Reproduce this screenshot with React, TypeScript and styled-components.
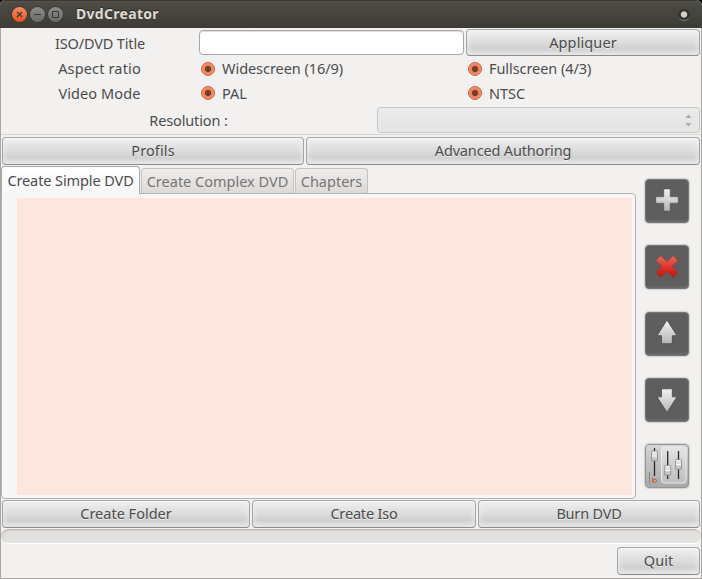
import React from "react";
import styled, { createGlobalStyle, css } from "styled-components";

const GlobalStyle = createGlobalStyle`
  * { box-sizing: border-box; }
  body { margin: 0; overflow: hidden; background: #000; }
  button { margin: 0; padding: 0; font: inherit; color: inherit; }
`;

const Window = styled.div`
  width: 702px;
  height: 579px;
  display: flex;
  flex-direction: column;
  font: 14.5px/20px "Noto Sans", sans-serif;
  color: #4c4c4c;
  background: #f2f1f0;
  border-radius: 5px 6px 0 0;
  overflow: hidden;
`;

const TitleBar = styled.header`
  height: 28px;
  flex: none;
  display: flex;
  align-items: center;
  padding: 0 10px 0 12px;
  gap: 3px;
  background: linear-gradient(#55534b, #4b4a43 3px, #3c3b37);
  border-top: 1px solid #393834;
`;

const WindowButton = styled.button<{ $close?: boolean }>`
  width: 15px;
  height: 15px;
  flex: none;
  display: grid;
  place-items: center;
  border: 0;
  border-radius: 50%;
  color: #393834;
  background: ${(p) => (p.$close ? "linear-gradient(#f98d64, #e9501e)" : "linear-gradient(#8d8c86, #6b6a65)")};
  box-shadow: 0 0 0 1px #3b3a36;
`;

const Text = styled.span<{ $spacing?: number }>`
  white-space: pre;
  letter-spacing: ${(p) => p.$spacing ?? 0}px;
`;

const WindowTitle = styled.h1`
  margin: 0 auto 0 10px;
  padding-bottom: 1px;
  font: bold 14px/20px "Noto Sans", sans-serif;
  color: #dfdbd2;
  text-shadow: 0 -1px #282824;
`;

const StatusDot = styled.span`
  width: 12px;
  height: 12px;
  border-radius: 50%;
  background: radial-gradient(circle, #d3cfc7 0 2.7px, #30302c 3.7px 6px);
  border-bottom: 1px solid #777670;
  margin-right: 2px;
`;

const Body = styled.main`
  flex: 1;
  border: solid #aaa6a1;
  border-width: 0 1px 1px;
  display: flex;
  flex-direction: column;
`;

const Settings = styled.section`
  height: 107px;
  flex: none;
  border-bottom: 1px solid #d8d6d4;
`;

const FieldRow = styled.div<{ $height: number; $lift?: number }>`
  display: grid;
  grid-template-columns: 198px 265px 1fr;
  column-gap: 2px;
  height: ${(p) => p.$height}px;
  align-items: center;
  padding-right: 1px;
  ${Text} {
    padding-bottom: ${(p) => p.$lift ?? 0}px;
  }
`;

const TitleRow = styled.div`
  display: grid;
  grid-template-columns: 198px 265px 1fr;
  column-gap: 2px;
  height: 28px;
  align-items: start;
  padding: 1px 1px 0 0;
`;

const FieldLabel = styled.label<{ $shift?: number }>`
  display: flex;
  justify-content: center;
  padding-right: ${(p) => p.$shift ?? 2}px;
`;

const TitleLabel = styled(FieldLabel)`
  padding-top: 4px;
`;

const Entry = styled.input`
  height: 25px;
  width: 265px;
  margin: 1px 0 0 -2px;
  border: 1px solid #aaa7a4;
  border-radius: 4px;
  background: #fff;
  box-shadow: inset 0 1px 1px #ddd;
  outline: 0;
`;

const RadioOption = styled.label`
  display: flex;
  align-items: center;
  gap: 7px;
`;

const RadioMark = styled.span`
  width: 14px;
  height: 14px;
  flex: none;
  border-radius: 50%;
  border: 1px solid #c75e3c;
  background: radial-gradient(circle, #713e2c 0 2.7px, #f18159 3.5px 4.5px, #f79b77 6px);
  box-shadow: 0 1px #fff;
`;

const ResolutionRow = styled.div`
  display: grid;
  grid-template-columns: 375px 1fr;
  height: 26px;
  margin-top: 3px;
  padding-right: 1px;
  align-items: center;
  ${Text} {
    padding-bottom: 1px;
  }
`;

const Combo = styled.div`
  height: 26px;
  border: 1px solid #c8c6c4;
  border-radius: 4px;
  margin-left: 1px;
  background: linear-gradient(#ebebeb, #e3e3e3);
  box-shadow: inset 0 0 5px #eeeeed;
  display: flex;
  justify-content: flex-end;
  align-items: center;
  padding: 1px 7px 0 0;
`;

const raised = css`
  border: 1px solid #a7a6a5;
  border-bottom-color: #8c8b8a;
  border-radius: 4px;
  background: linear-gradient(#efefef, #dedede 45%, #d0d0d0 75%, #dfdfdf);
  box-shadow: inset 0 1px #f8f8f8, inset 0 0 6px 1px rgba(245, 245, 245, 0.65);
`;

const PushButton = styled.button<{ $height?: number }>`
  ${raised}
  height: ${(p) => p.$height ?? 28}px;
  min-width: 0;
  text-shadow: 0 1px #eee;
  padding-bottom: 2px;
`;

const ApplyButton = styled(PushButton)`
  margin-left: -2px;
`;

const ActionRow = styled.div<{ $columns: string }>`
  display: grid;
  grid-template-columns: ${(p) => p.$columns};
  gap: 2px;
  height: 28px;
  padding: 0 1px;
  flex: none;
`;

const TopActions = styled.div`
  padding-top: 2px;
`;

const Workspace = styled.section`
  display: grid;
  grid-template-columns: 635px 1fr;
  height: 333px;
  margin: 1px 0;
  flex: none;
`;

const Notebook = styled.div`
  display: grid;
  grid-template-rows: 27px 1fr;
`;

const Tabs = styled.div`
  display: flex;
  align-items: flex-end;
  gap: 1px;
`;

const Tab = styled.button<{ $width: number; $active?: boolean }>`
  width: ${(p) => p.$width}px;
  height: ${(p) => (p.$active ? 28 : 25)}px;
  border: 1px solid ${(p) => (p.$active ? "#aaa7a4" : "#c5c2bf")};
  border-bottom: 0;
  border-radius: 4px 4px 0 0;
  background: ${(p) => (p.$active ? "linear-gradient(#fff, #f7f7f7)" : "linear-gradient(#efeeed, #ddd9d7)")};
  color: ${(p) => (p.$active ? "#4c4c4c" : "#777573")};
  align-self: ${(p) => (p.$active ? "flex-start" : "flex-end")};
  z-index: ${(p) => (p.$active ? 1 : 0)};
  padding-bottom: ${(p) => (p.$active ? 2 : 0)}px;
`;

const TabPanel = styled.div`
  border: 1px solid #b5b2af;
  border-radius: 0 4px 4px 4px;
  background: #f7f7f7;
  padding: 4px 3px 3px 15px;
  display: flex;
`;

const FileList = styled.div`
  flex: 1;
  background: #fde6de;
`;

const SideTools = styled.aside`
  display: flex;
  flex-direction: column;
  gap: 22.3px;
  padding: 13.2px 0 0 9px;
`;

const ToolButton = styled.button<{ $light?: boolean }>`
  width: 44px;
  height: 44px;
  flex: none;
  display: block;
  border: 1px solid ${(p) => (p.$light ? "#959595" : "#777")};
  border-radius: 4px;
  background: ${(p) => (p.$light ? "linear-gradient(#d6d6d6, #a9a9a9)" : "#5e5e5e")};
  box-shadow: 0 0 1px 1px #d1d0cf${(p) => (p.$light ? "" : ", inset 0 -2px #686868")};
  svg { display: block; }
`;

const Progress = styled.div`
  height: 15px;
  flex: none;
  margin-top: 1px;
  border-radius: 8px;
  border-top: 1px solid #bab8b6;
  border-bottom: 1px solid #fff;
  background: #e2e1e0;
  box-shadow: inset 2px 1px 2px #d5d3d1;
`;

const Footer = styled.footer`
  display: grid;
  grid-template-columns: 83px;
  justify-content: end;
  padding: 3px 1px 0 0;
`;

function Radio({ text, spacing }: { text: string; spacing?: number }) {
  return (
    <RadioOption>
      <RadioMark />
      <Text $spacing={spacing}>{text}</Text>
    </RadioOption>
  );
}

function Slider({ x, top, bottom, knob }: { x: number; top: number; bottom: number; knob: number }) {
  return (
    <g>
      <path d={`M${x} ${top}V${bottom}`} stroke="#292929" strokeWidth="1.3" />
      <rect x={x - 3} y={knob} width="6" height="10" rx="1" fill={`url(#knob)`} stroke="#858585" strokeWidth=".8" />
      <path d={`M${x - 2.5} ${knob + 5}h5`} stroke="#fff" />
    </g>
  );
}

function ToolIcon({ kind }: { kind: "add" | "remove" | "up" | "down" | "mixer" }) {
  return (
    <svg width="42" height="42" viewBox="0 0 42 42" fill="none">
      <defs>
        <linearGradient id={`fill-${kind}`} x1="0" y1="0" x2="0" y2="1">
          <stop stopColor={kind === "remove" ? "#f36557" : "#f3f3f3"} />
          <stop offset="1" stopColor={kind === "remove" ? "#c90d08" : "#b4b4b4"} />
        </linearGradient>
      </defs>
      {kind === "add" && (
        <path d="M17.8 9h6.4v7.8h8v6.4h-8V31h-6.4v-7.8h-8v-6.4h8z" fill="url(#fill-add)" stroke="#484848" strokeWidth=".5" />
      )}
      {kind === "remove" && (
        <path
          d="M14.8 9.7 21 15.7l6.2-6L32 14.5l-6.1 6 6.1 6-4.8 4.8-6.2-6-6.2 6-4.8-4.8 6.1-6-6.1-6z"
          fill="url(#fill-remove)"
          stroke="#a52a24"
          strokeWidth=".5"
        />
      )}
      {kind === "up" && (
        <path d="m21 7 10 15.7h-4.7v8H15.5v-8H11z" fill="url(#fill-up)" stroke="#484848" strokeWidth=".8" />
      )}
      {kind === "down" && (
        <path d="M15.5 9.8h10.8v8H31L21 33.5l-10-15.7h4.5z" fill="url(#fill-down)" stroke="#484848" strokeWidth=".8" />
      )}
      {kind === "mixer" && (
        <>
          <defs>
            <linearGradient id="panel" x1="0" y1="0" x2="0" y2="1">
              <stop stopColor="#e4e4e4" />
              <stop offset="1" stopColor="#bebebe" />
            </linearGradient>
            <linearGradient id="knob" x1="0" y1="0" x2="0" y2="1">
              <stop stopColor="#f1f1f1" />
              <stop offset="1" stopColor="#bdbdbd" />
            </linearGradient>
          </defs>
          <path d="M1 5h14M1 9h14M1 14h14M1 20h14M1 25h14M1 31h14" stroke="#c5c5c5" strokeWidth=".5" />
          <rect x="15.5" y="2" width="24.5" height="36" rx="3" fill="url(#panel)" stroke="#ededed" />
          <Slider x={8.5} top={3} bottom={31} knob={6} />
          <Slider x={21.7} top={6} bottom={34} knob={20.3} />
          <Slider x={32.5} top={6} bottom={34} knob={14.5} />
          <path d="M3.5 27v12M6.5 32v6" stroke="#858585" strokeWidth=".9" />
          <rect x="7.3" y="34.3" width="3" height="3" rx="1" fill="#f4b06f" stroke="#b7442b" strokeWidth=".9" />
        </>
      )}
    </svg>
  );
}

function SettingsPanel() {
  return (
    <Settings>
      <TitleRow>
        <TitleLabel $shift={0}><Text $spacing={-0.14}>ISO/DVD Title</Text></TitleLabel>
        <Entry aria-label="ISO/DVD Title" />
        <ApplyButton $height={27}><Text $spacing={0.1}>Appliquer</Text></ApplyButton>
      </TitleRow>
      <FieldRow $height={26} $lift={2}>
        <FieldLabel $shift={1}><Text $spacing={0.15}>Aspect ratio</Text></FieldLabel>
        <Radio text="Widescreen (16/9)" spacing={-0.05} />
        <Radio text="Fullscreen (4/3)" spacing={-0.07} />
      </FieldRow>
      <FieldRow $height={22}>
        <FieldLabel $shift={1}><Text $spacing={0.1}>Video Mode</Text></FieldLabel>
        <Radio text="PAL" />
        <Radio text="NTSC" />
      </FieldRow>
      <ResolutionRow>
        <FieldLabel $shift={0}><Text $spacing={-0.14}>Resolution :</Text></FieldLabel>
        <Combo>
          <svg width="7" height="13" fill="#aaa"><path d="M.5 4h6l-3-3.5zM.5 9h6l-3 3.5z" /></svg>
        </Combo>
      </ResolutionRow>
    </Settings>
  );
}

export default function App() {
  return (
    <>
      <GlobalStyle />
      <Window>
        <TitleBar>
          <WindowButton $close aria-label="Close">
            <svg width="9" height="9" stroke="currentColor" strokeWidth="1.2"><path d="m2 2 5 5M7 2 2 7" /></svg>
          </WindowButton>
          <WindowButton aria-label="Minimize">
            <svg width="9" height="9" stroke="currentColor"><path d="M1 4.5h7" /></svg>
          </WindowButton>
          <WindowButton aria-label="Maximize">
            <svg width="9" height="9" stroke="currentColor" fill="none"><path d="M1.5 1.5h6v6h-6z" /></svg>
          </WindowButton>
          <WindowTitle><Text $spacing={0.3}>DvdCreator</Text></WindowTitle>
          <StatusDot />
        </TitleBar>
        <Body>
          <SettingsPanel />
          <TopActions>
            <ActionRow $columns="302px 1fr">
              <PushButton><Text $spacing={0.1}>Profils</Text></PushButton>
              <PushButton><Text $spacing={-0.16}>Advanced Authoring</Text></PushButton>
            </ActionRow>
          </TopActions>
          <Workspace>
            <Notebook>
              <Tabs>
                <Tab $active $width={139}><Text $spacing={-0.1}>Create Simple DVD</Text></Tab>
                <Tab $width={153}><Text>Create Complex DVD</Text></Tab>
                <Tab $width={73}><Text>Chapters</Text></Tab>
              </Tabs>
              <TabPanel><FileList /></TabPanel>
            </Notebook>
            <SideTools>
              <ToolButton aria-label="Add"><ToolIcon kind="add" /></ToolButton>
              <ToolButton aria-label="Remove"><ToolIcon kind="remove" /></ToolButton>
              <ToolButton aria-label="Move up"><ToolIcon kind="up" /></ToolButton>
              <ToolButton aria-label="Move down"><ToolIcon kind="down" /></ToolButton>
              <ToolButton $light aria-label="Levels"><ToolIcon kind="mixer" /></ToolButton>
            </SideTools>
          </Workspace>
          <ActionRow $columns="248px 224px 1fr">
            <PushButton><Text>Create Folder</Text></PushButton>
            <PushButton><Text $spacing={-0.18}>Create Iso</Text></PushButton>
            <PushButton><Text $spacing={-0.2}>Burn DVD</Text></PushButton>
          </ActionRow>
          <Progress />
          <Footer><PushButton><Text>Quit</Text></PushButton></Footer>
        </Body>
      </Window>
    </>
  );
}
